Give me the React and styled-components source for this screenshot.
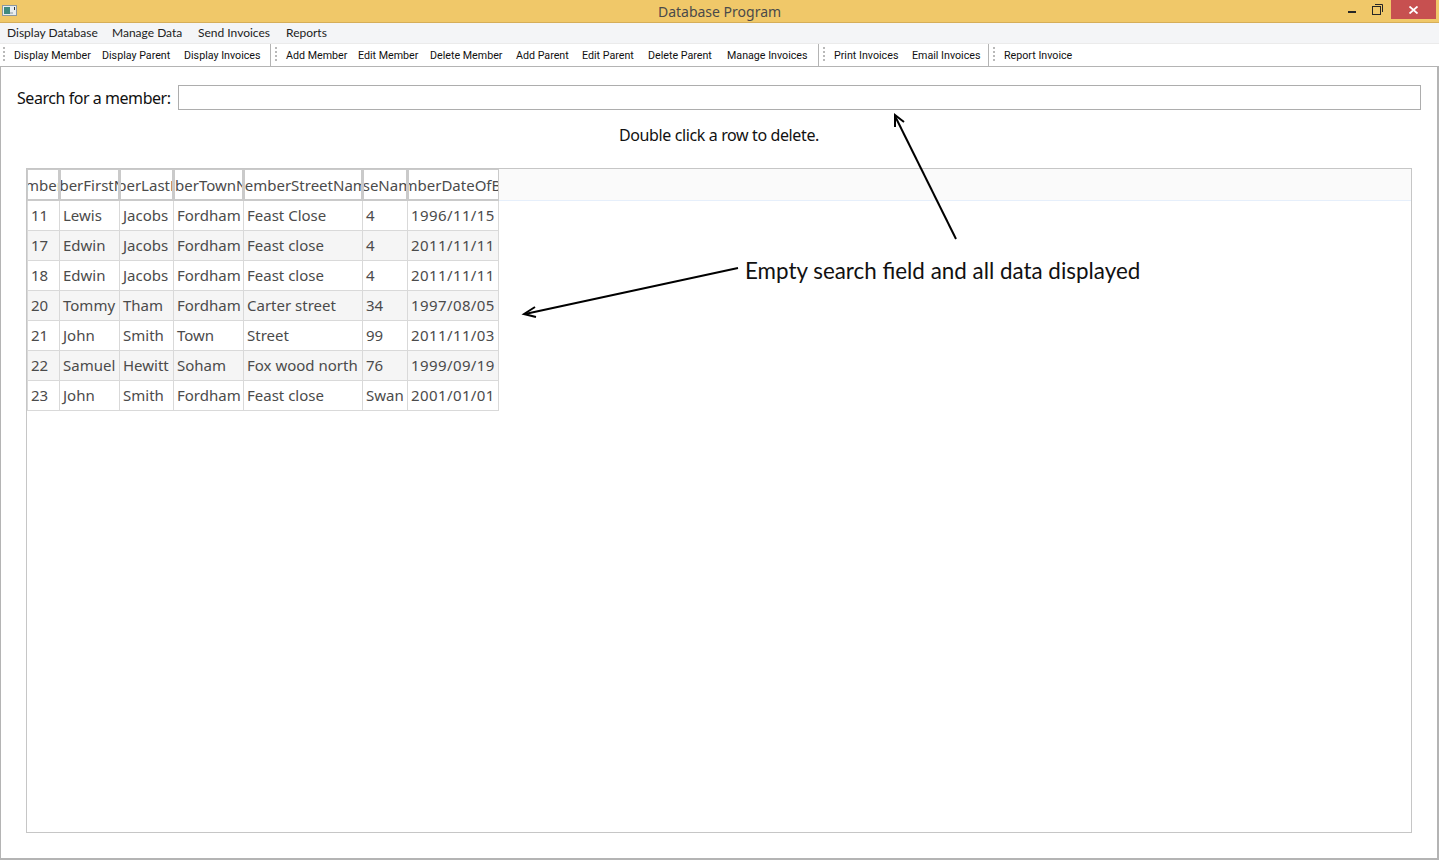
import React from 'react'
import styled, { createGlobalStyle } from 'styled-components'

const Global = createGlobalStyle`
  html, body { margin: 0; padding: 0; background: #fff; }
  body { font-family: "Noto Sans", "Open Sans", sans-serif; overflow: hidden; }
`

const Win = styled.div`
  position: relative;
  width: 1439px;
  height: 860px;
  display: flex;
  flex-direction: column;
  box-sizing: border-box;
  overflow: hidden;
`
const TitleBar = styled.div`
  height: 23px;
  flex: none;
  box-sizing: border-box;
  background: #f0c869;
  border-bottom: 1px solid #d6ae59;
  display: flex;
  align-items: flex-start;
  padding-left: 2px;
`
const AppIcon = styled.svg`
  width: 15px;
  height: 11px;
  margin-top: 5px;
  flex: none;
`
const Title = styled.div`
  flex: 1;
  text-align: center;
  font-size: 14px;
  line-height: 23px;
  color: #4a4a4a;
  padding-left: 84px;
`
const Controls = styled.div`
  display: flex;
  align-items: flex-start;
  margin-right: 3px;
`
const Ctl = styled.div`
  width: ${p => p.$w}px;
  height: 19px;
  box-sizing: border-box;
  padding-right: ${p => p.$pr || 0}px;
  display: flex;
  align-items: center;
  justify-content: center;
  background: ${p => p.$bg || 'transparent'};
`
const MenuBar = styled.div`
  height: 21px;
  flex: none;
  box-sizing: border-box;
  background: #f4f5f7;
  border-bottom: 1px solid #ebebeb;
  display: flex;
  align-items: center;
  padding: 0 0 1px 7px;
  font-family: "Lato", sans-serif;
  font-size: 12px;
  color: #222;
`
const MenuItem = styled.span`
  width: ${p => p.$w}px;
  flex: none;
  white-space: nowrap;
`
const ToolBar = styled.div`
  height: 23px;
  flex: none;
  box-sizing: border-box;
  background: #fff;
  border-bottom: 1px solid #b4b4b4;
  display: flex;
  align-items: stretch;
  font-family: "Roboto", sans-serif;
  font-size: 10.7px;
  color: #111;
`
const ToolGroup = styled.div`
  width: ${p => p.$w}px;
  flex: none;
  box-sizing: border-box;
  display: flex;
  align-items: center;
  padding-left: ${p => (p.$first ? 3 : 4)}px;
  border-right: ${p => (p.$last ? 'none' : '1px solid #b4b4b4')};
`
const Grip = styled.span`
  width: 2px;
  height: 16px;
  margin-right: 9px;
  flex: none;
  background: repeating-linear-gradient(to bottom, #b9b9b9 0 2px, transparent 2px 4px);
`
const ToolBtn = styled.span`
  width: ${p => p.$w}px;
  flex: none;
  padding-top: 1px;
  white-space: nowrap;
`
const Body = styled.div`
  flex: 1;
  min-height: 0;
  display: flex;
  flex-direction: column;
  box-sizing: border-box;
  border-left: 1px solid #b4b4b4;
  border-right: 2px solid #b4b4b4;
  border-bottom: 2px solid #b4b4b4;
  padding: 18px 16px 25px 16px;
`
const SearchRow = styled.div`
  display: flex;
  align-items: center;
  gap: 6px;
  height: 25px;
  font-size: 16px;
  letter-spacing: -0.45px;
  color: #111;
`
const SearchLabel = styled.label`
  white-space: nowrap;
  width: 155px;
  flex: none;
`
const SearchInput = styled.input`
  flex: 1;
  height: 25px;
  box-sizing: border-box;
  border: 1px solid #adadad;
  outline: none;
  background: #fff;
`
const Hint = styled.div`
  margin-top: 15px;
  height: 20px;
  line-height: 20px;
  text-align: center;
  font-size: 16px;
  letter-spacing: -0.38px;
  color: #111;
`
const TableFrame = styled.div`
  flex: 1;
  margin: 23px 9px 0 9px;
  border: 1px solid #c6c6c6;
  min-height: 0;
`
const HeadStrip = styled.div`
  height: 32px;
  box-sizing: border-box;
  background: #fafafa;
  border-bottom: 1px solid #e6effb;
`
const Grid = styled.div`
  display: grid;
  grid-template-columns: 33px 60px 54px 70px 119px 45px 91px;
  width: 472px;
`
const HeadCell = styled.div`
  height: 32px;
  box-sizing: border-box;
  background: #fff;
  border: 1px solid #cacaca;
  border-width: 1px 2px 2px 1px;
  border-right-width: ${p => (p.$last ? '1px' : '2px')};
  display: flex;
  align-items: center;
  justify-content: center;
  overflow: hidden;
  white-space: nowrap;
  font-size: 15px;
  color: #4b4b4b;
`
const Cell = styled.div`
  height: 30px;
  box-sizing: border-box;
  padding-left: 3px;
  line-height: 29px;
  font-size: 15px;
  letter-spacing: ${p => (p.$num ? '0.4px' : '0')};
  color: #4b4b4b;
  white-space: nowrap;
  overflow: hidden;
  background: ${p => (p.$alt ? '#f5f5f5' : '#fff')};
  border-right: 1px solid #d9d9d9;
  border-bottom: 1px solid #d9d9d9;
  border-left: ${p => (p.$first ? '1px solid #d9d9d9' : 'none')};
`
const Overlay = styled.svg`
  position: absolute;
  left: 0;
  top: 0;
  width: 1439px;
  height: 860px;
  pointer-events: none;
`
const Callout = styled.div`
  position: absolute;
  left: 745px;
  top: 256px;
  font-family: "Lato", sans-serif;
  font-size: 22.4px;
  line-height: 30px;
  color: #111;
  white-space: nowrap;
`

const menus = [['Display Database', 105], ['Manage Data', 86], ['Send Invoices', 88], ['Reports', 60]]
const toolGroups = [
  { w: 271, first: true, items: [['Display Member', 88], ['Display Parent', 82], ['Display Invoices', 86]] },
  {
    w: 548,
    items: [
      ['Add Member', 72], ['Edit Member', 72], ['Delete Member', 86], ['Add Parent', 66],
      ['Edit Parent', 66], ['Delete Parent', 79], ['Manage Invoices', 90],
    ],
  },
  { w: 170, items: [['Print Invoices', 78], ['Email Invoices', 76]] },
  { w: 300, last: true, items: [['Report Invoice', 90]] },
]
const heads = ['memberNo', 'memberFirstName', 'memberLastName', 'memberTownName', 'memberStreetName', 'memberHouseNameOrNumber', 'memberDateOfBirth']
const rows = [
  ['11', 'Lewis', 'Jacobs', 'Fordham', 'Feast Close', '4', '1996/11/15'],
  ['17', 'Edwin', 'Jacobs', 'Fordham', 'Feast close', '4', '2011/11/11'],
  ['18', 'Edwin', 'Jacobs', 'Fordham', 'Feast close', '4', '2011/11/11'],
  ['20', 'Tommy', 'Tham', 'Fordham', 'Carter street', '34', '1997/08/05'],
  ['21', 'John', 'Smith', 'Town', 'Street', '99', '2011/11/03'],
  ['22', 'Samuel', 'Hewitt', 'Soham', 'Fox wood north', '76', '1999/09/19'],
  ['23', 'John', 'Smith', 'Fordham', 'Feast close', 'Swan', '2001/01/01'],
]

function App() {
  return (
    <Win>
      <Global />
      <TitleBar>
        <AppIcon viewBox="0 0 15 11">
          <rect x="0.5" y="0.5" width="14" height="10" fill="#e9edf0" stroke="#8b98a0" />
          <rect x="2" y="2" width="6" height="7" fill="#3f8a7e" />
          <rect x="8" y="7" width="3" height="2" fill="#b8c2c8" />
          <rect x="12" y="2" width="1" height="3" fill="#333" />
        </AppIcon>
        <Title>Database Program</Title>
        <Controls>
          <Ctl $w={28}>
            <svg width="8" height="19" viewBox="0 0 8 19"><rect width="8" height="2" y="11" fill="#262626" /></svg>
          </Ctl>
          <Ctl $w={25} $pr={3}>
            <svg width="11" height="11" viewBox="0 0 11 11" fill="none" stroke="#262626">
              <rect x="0.5" y="2.5" width="8" height="8" strokeWidth="1" />
              <path d="M3 .5h7.500v7.500" strokeWidth="1" />
            </svg>
          </Ctl>
          <Ctl $w={45} $bg="#c75050">
            <svg width="9" height="8" viewBox="0 0 9 8" stroke="#fff" strokeWidth="1.800" fill="none">
              <path d="M.5 .5l8 7M8.500 .5l-8 7" />
            </svg>
          </Ctl>
        </Controls>
      </TitleBar>
      <MenuBar>
        {menus.map(([m, w]) => <MenuItem key={m} $w={w}>{m}</MenuItem>)}
      </MenuBar>
      <ToolBar>
        {toolGroups.map(g => (
          <ToolGroup key={g.items[0][0]} $w={g.w} $first={g.first} $last={g.last}>
            <Grip />
            {g.items.map(([label, w]) => <ToolBtn key={label} $w={w}>{label}</ToolBtn>)}
          </ToolGroup>
        ))}
      </ToolBar>
      <Body>
        <SearchRow>
          <SearchLabel>Search for a member:</SearchLabel>
          <SearchInput />
        </SearchRow>
        <Hint>Double click a row to delete.</Hint>
        <TableFrame>
          <HeadStrip>
            <Grid>
              {heads.map((h, i) => <HeadCell key={h} $last={i === heads.length - 1}>{h}</HeadCell>)}
            </Grid>
          </HeadStrip>
          <Grid>
            {rows.map((r, ri) => r.map((c, ci) => (
              <Cell key={ri + '-' + ci} $alt={ri % 2 === 1} $first={ci === 0} $num={ci === 6}>{c}</Cell>
            )))}
          </Grid>
        </TableFrame>
      </Body>
      <Callout>Empty search field and all data displayed</Callout>
      <Overlay viewBox="0 0 1439 860" fill="none" stroke="#000" strokeWidth="2">
        <path d="M956 239L895 116" />
        <path d="M895 127L895 115L904 122" />
        <path d="M738 268L525 314" />
        <path d="M535 307L524 314L536 317" />
      </Overlay>
    </Win>
  )
}

export default App
